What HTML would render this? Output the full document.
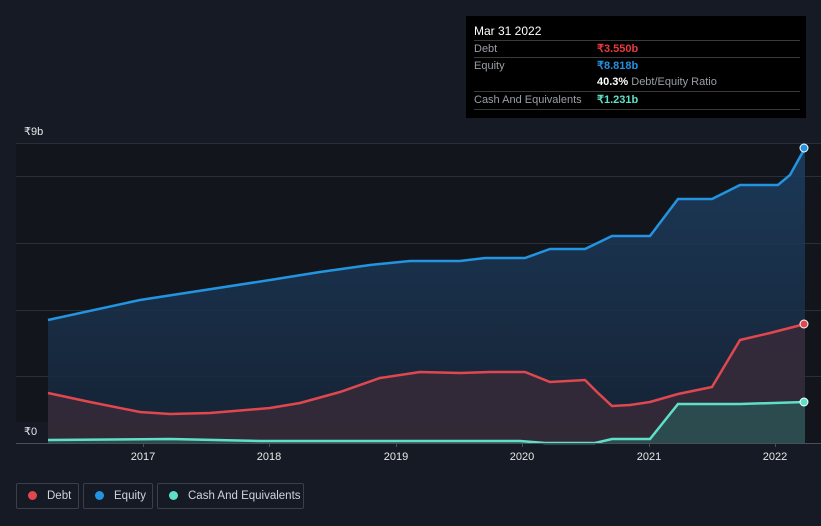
<!DOCTYPE html>
<html style="overflow:hidden;height:526px"><head><meta charset="utf-8"><style>
body{margin:0;width:821px;height:526px;background:#151a24;font-family:"Liberation Sans",sans-serif;overflow:hidden;position:relative;color:#fff}
.tt{position:absolute;left:466px;top:16px;width:340px;height:102px;background:#000;font-size:11px}
.row{position:absolute;left:8px;width:326px;border-top:1px solid #3a3a3a;height:17px;line-height:17px}
.row span{position:absolute;left:123px;font-weight:bold}
.lab{color:#9a9ea6}
.leg{position:absolute;top:483px;height:26px;border:1px solid #3a3f4a;border-radius:2px;font-size:11.5px;color:#cfd3da;line-height:24px;box-sizing:border-box;white-space:nowrap}
.leg i{display:inline-block;width:9px;height:9px;border-radius:50%;margin:0 10px 0 11px;vertical-align:-1px}
</style></head><body>
<svg width="821" height="526" style="position:absolute;left:0;top:0">
<defs>
<linearGradient id="ge" x1="0" y1="0" x2="0" y2="1"><stop offset="0" stop-color="#1d3f63"/><stop offset="1" stop-color="#162538"/></linearGradient>
</defs>
<rect x="16" y="143" width="805" height="300" fill="#12151c"/>
<g stroke="#2a2e36" stroke-width="1"><line x1="16" y1="143.5" x2="821" y2="143.5"/><line x1="16" y1="176.5" x2="821" y2="176.5"/><line x1="16" y1="243.5" x2="821" y2="243.5"/><line x1="16" y1="310.5" x2="821" y2="310.5"/><line x1="16" y1="376.5" x2="821" y2="376.5"/></g>
<path d="M48,320 L140,300 L270,280 L320,272 L370,265 L410,261 L460,261 L485,258 L525,258 L550,249 L585,249 L612,236 L650,236 L678,199 L712,199 L740,185 L778,185 L790,175 L805,148 L805,443 L48,443Z" fill="url(#ge)" opacity="0.85"/>
<path d="M48,393 L90,402 L140,412 L170,414 L210,413 L270,408 L300,403 L340,392 L380,378 L420,372 L460,373 L490,372 L525,372 L550,382 L585,380 L597,392 L612,406 L630,405 L650,402 L678,394 L712,387 L740,340 L770,333 L805,324 L805,443 L48,443Z" fill="#3a2a38" opacity="0.8"/>
<path d="M48,440 L170,439 L260,441 L520,441 L545,443 L595,443 L612,439 L650,439 L678,404 L740,404 L805,402 L805,443 L48,443Z" fill="#2a4f52" opacity="0.9"/>
<path d="M48,320 L140,300 L270,280 L320,272 L370,265 L410,261 L460,261 L485,258 L525,258 L550,249 L585,249 L612,236 L650,236 L678,199 L712,199 L740,185 L778,185 L790,175 L805,148" fill="none" stroke="#2394e0" stroke-width="2.5"/>
<path d="M48,393 L90,402 L140,412 L170,414 L210,413 L270,408 L300,403 L340,392 L380,378 L420,372 L460,373 L490,372 L525,372 L550,382 L585,380 L597,392 L612,406 L630,405 L650,402 L678,394 L712,387 L740,340 L770,333 L805,324" fill="none" stroke="#e0474f" stroke-width="2.5"/>
<path d="M48,440 L170,439 L260,441 L520,441 L545,443 L595,443 L612,439 L650,439 L678,404 L740,404 L805,402" fill="none" stroke="#5ee0c8" stroke-width="2.5"/>
<circle cx="804" cy="148" r="4" fill="#2394e0" stroke="#fff" stroke-width="1"/>
<circle cx="804" cy="324" r="4" fill="#e0474f" stroke="#fff" stroke-width="1"/>
<circle cx="804" cy="402" r="4" fill="#5ee0c8" stroke="#fff" stroke-width="1"/>
<line x1="16" y1="443.5" x2="821" y2="443.5" stroke="#4a4e56"/>
<g stroke="#4a4e56"><line x1="143.5" y1="443" x2="143.5" y2="447"/><line x1="269.5" y1="443" x2="269.5" y2="447"/><line x1="396.5" y1="443" x2="396.5" y2="447"/><line x1="522.5" y1="443" x2="522.5" y2="447"/><line x1="649.5" y1="443" x2="649.5" y2="447"/><line x1="775.5" y1="443" x2="775.5" y2="447"/></g>
<rect x="16" y="422" width="32" height="21" fill="#151a24"/>
<g font-size="11" fill="#e8e8e8" text-anchor="middle"><text x="143" y="460">2017</text><text x="269" y="460">2018</text><text x="396" y="460">2019</text><text x="522" y="460">2020</text><text x="649" y="460">2021</text><text x="775" y="460">2022</text></g>
<text x="24" y="135" font-size="11" fill="#e8e8e8">₹9b</text>
<text x="24" y="435" font-size="11" fill="#e8e8e8">₹0</text>
</svg>
<div class="tt">
<div style="position:absolute;left:8px;top:8px;font-size:12px">Mar 31 2022</div>
<div class="row lab" style="top:24px">Debt<span style="color:#e83a3f">₹3.550b</span></div>
<div class="row lab" style="top:41px">Equity<span style="color:#2590e0">₹8.818b</span></div>
<div class="row lab" style="top:58px;border:none">&nbsp;<span style="color:#fff">40.3% <b style="color:#9a9ea6;font-weight:normal">Debt/Equity Ratio</b></span></div>
<div class="row lab" style="top:75px">Cash And Equivalents<span style="color:#5ee0c8">₹1.231b</span></div>
<div class="row" style="top:93px;height:0"></div>
</div>
<div class="leg" style="left:16px;width:63px"><i style="background:#e0474f"></i>Debt</div>
<div class="leg" style="left:83px;width:70px"><i style="background:#2394e0"></i>Equity</div>
<div class="leg" style="left:157px;width:147px"><i style="background:#5ee0c8"></i>Cash And Equivalents</div>
</body></html>
